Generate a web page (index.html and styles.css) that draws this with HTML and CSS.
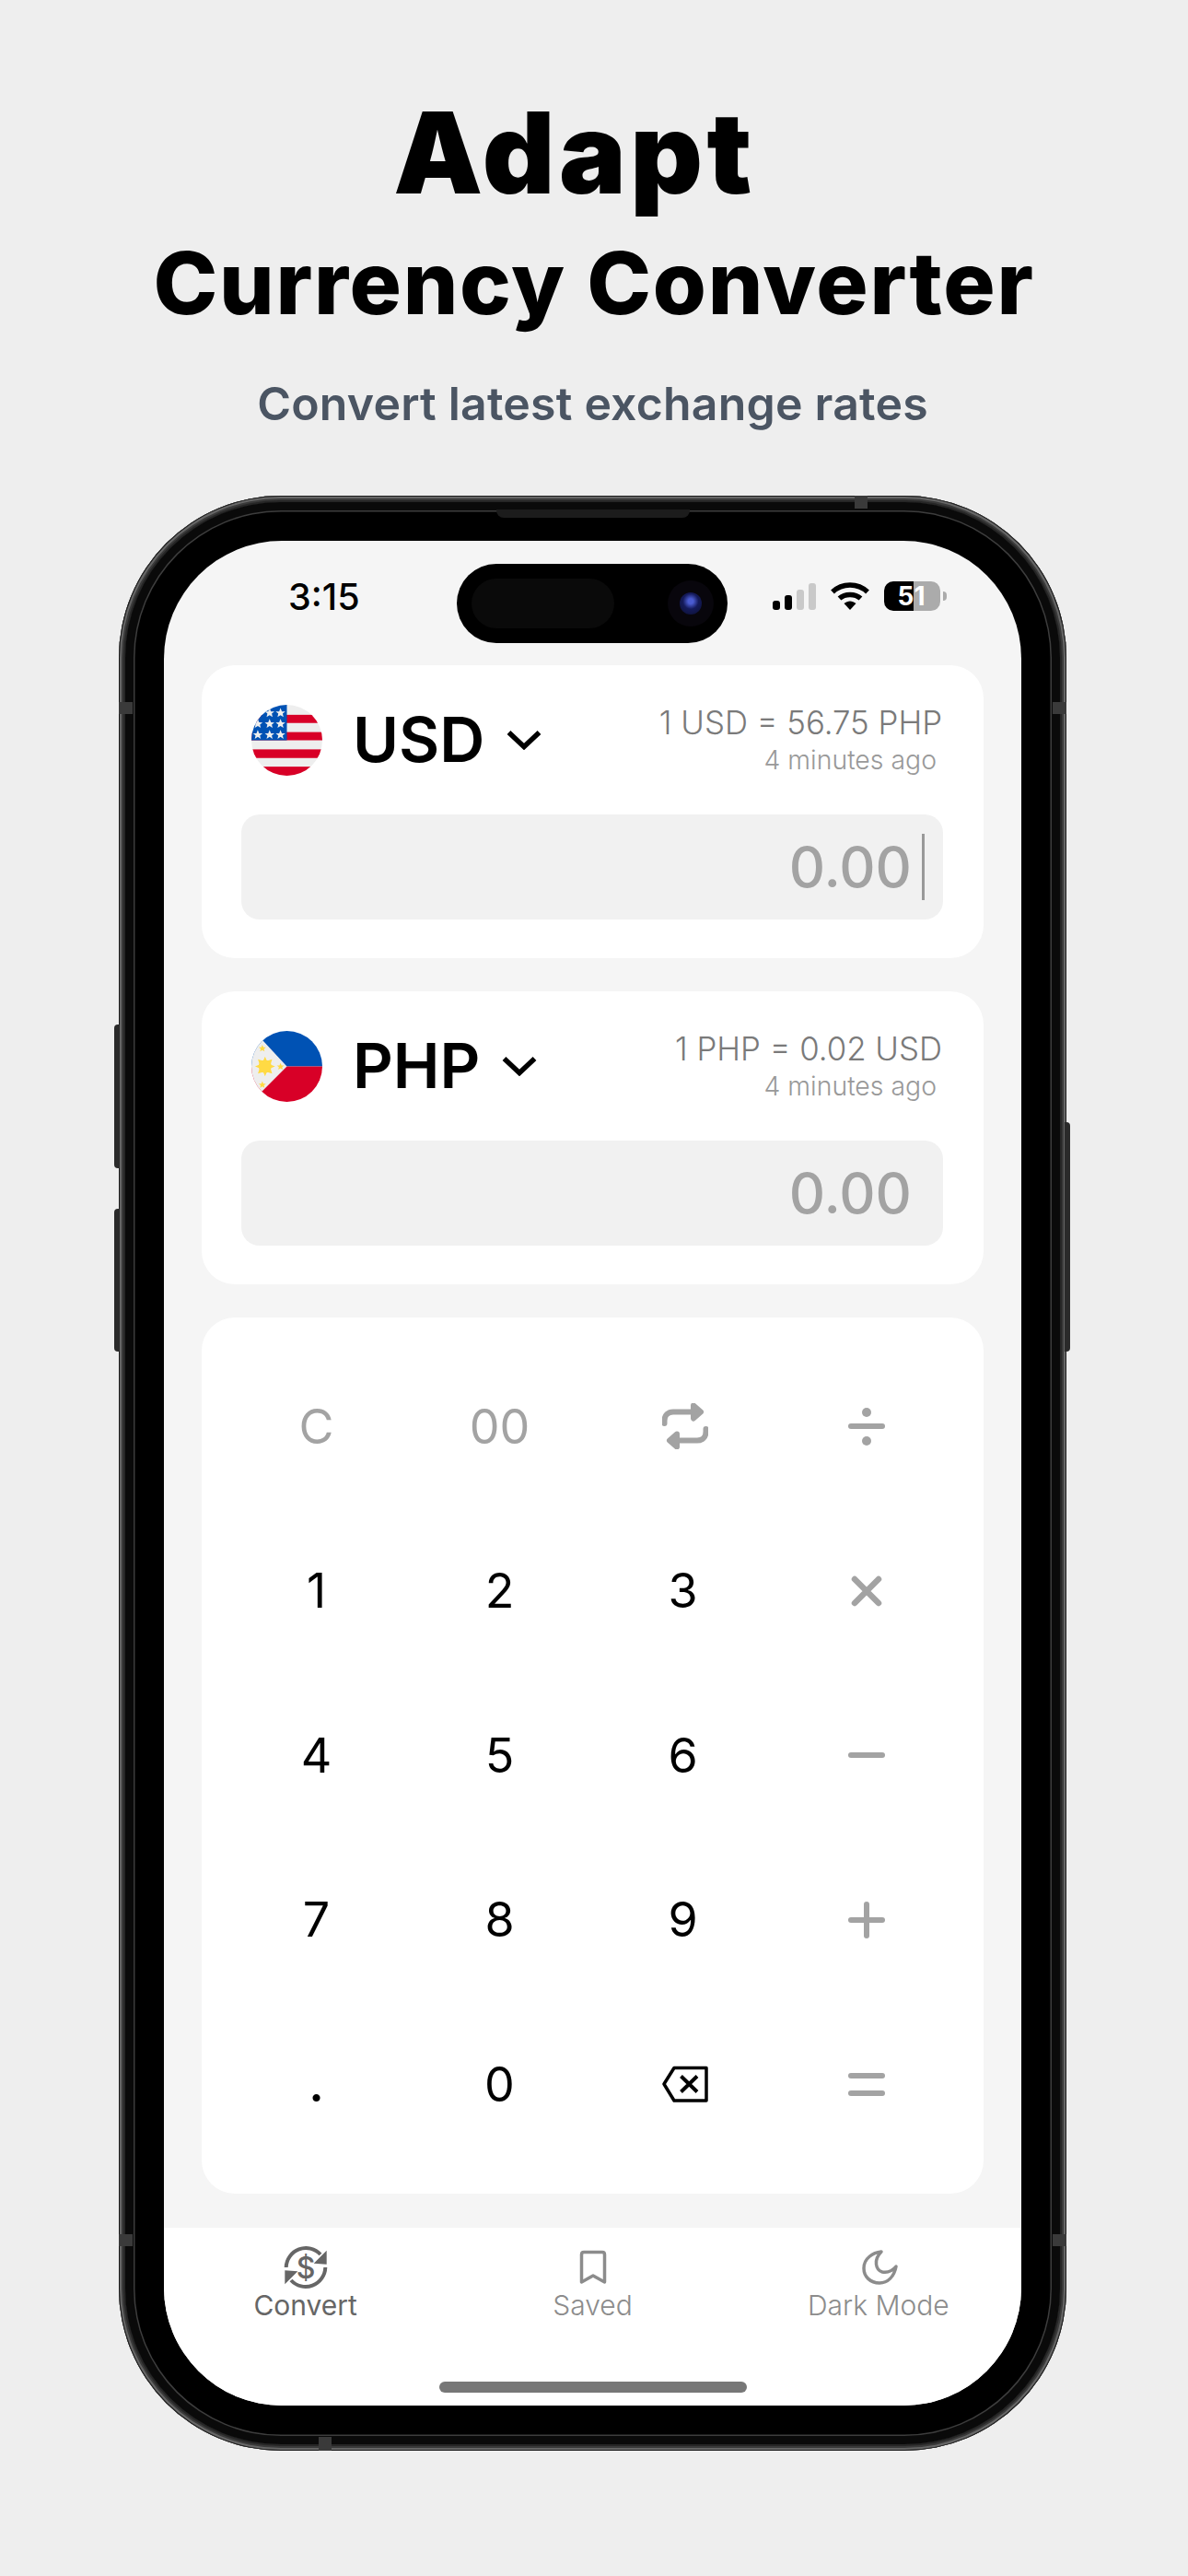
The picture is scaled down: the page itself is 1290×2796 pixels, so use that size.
FILE: index.html
```html
<!DOCTYPE html>
<html>
<head>
    <title>Adapt Currency Converter</title>
    <link rel="stylesheet" href="styles.css">
</head>
<body>
    <header class="hero">
        <h1 class="hero-name">Adapt</h1>
        <h2 class="hero-title">Currency Converter</h2>
        <p class="hero-sub">Convert latest exchange rates</p>
    </header>

    <div class="phone">
        <span class="side-btn vol-up"></span>
        <span class="side-btn vol-down"></span>
        <span class="side-btn power"></span>
        <span class="band band-top"></span>
        <span class="band band-bottom"></span>
        <span class="band band-lt"></span>
        <span class="band band-rt"></span>
        <span class="band band-lb"></span>
        <span class="band band-rb"></span>

        <div class="bezel">
            <span class="speaker"></span>
            <div class="screen">
                <div class="status">
                    <span class="time">3:15</span>
                    <div class="island">
                        <span class="island-pill"></span>
                        <span class="camera"><span class="lens"></span></span>
                    </div>
                    <div class="status-right">
                        <div class="signal">
                            <span class="bar b1"></span>
                            <span class="bar b2"></span>
                            <span class="bar b3"></span>
                            <span class="bar b4"></span>
                        </div>
                        <svg class="wifi" viewBox="0 0 42 30">
                            <path d="M2 10.500C12.500 0.500 29.500 0.500 40 10.500" fill="none" stroke="#000" stroke-width="5.500"/>
                            <path d="M9.500 17.500C15.500 12 26.500 12 32.500 17.500" fill="none" stroke="#000" stroke-width="5.500"/>
                            <path d="M14.500 23L21 30L27.500 23C23.500 19.500 18.500 19.500 14.500 23Z" fill="#000"/>
                        </svg>
                        <div class="battery">
                            <span class="battery-level">51</span>
                        </div>
                        <span class="battery-nub"></span>
                    </div>
                </div>

                <main class="content">
                    <section class="card currency">
                        <div class="currency-head">
                            <svg class="flag" viewBox="0 0 78 78">
                                <defs>
                                    <clipPath id="flagClip"><circle cx="39" cy="39" r="39"/></clipPath>
                                    <polygon id="star" points="0,-5.500 1.500,-1.700 5.300,-1.600 2.400,0.700 3.300,4.400 0,2.300 -3.300,4.400 -2.400,0.700 -5.300,-1.600 -1.500,-1.700"/>
                                </defs>
                                <g clip-path="url(#flagClip)">
                                    <rect width="78" height="78" fill="#eeeeee"/>
                                    <rect y="11" width="78" height="9" fill="#d80027"/>
                                    <rect y="30" width="78" height="9" fill="#d80027"/>
                                    <rect y="49" width="78" height="9.500" fill="#d80027"/>
                                    <rect y="68" width="78" height="10" fill="#d80027"/>
                                    <rect width="39" height="39" fill="#0052b4"/>
                                    <g fill="#eeeeee">
                                        <use href="#star" x="20" y="9"/>
                                        <use href="#star" x="32" y="9"/>
                                        <use href="#star" x="7" y="21"/>
                                        <use href="#star" x="20" y="21"/>
                                        <use href="#star" x="32" y="21"/>
                                        <use href="#star" x="7" y="33"/>
                                        <use href="#star" x="20" y="33"/>
                                        <use href="#star" x="32" y="33"/>
                                    </g>
                                </g>
                            </svg>
                            <span class="code">USD</span>
                            <svg class="chevron" viewBox="0 0 38 22">
                                <path d="M2.500 3L19 18.500L35.500 3" fill="none" stroke="#000" stroke-width="5.500"/>
                            </svg>
                            <div class="rate">
                                <span class="rate-value">1 USD = 56.75 PHP</span>
                                <span class="rate-time">4 minutes ago</span>
                            </div>
                        </div>
                        <div class="amount">
                            <span class="amount-value">0.00</span>
                            <span class="caret"></span>
                        </div>
                    </section>

                    <section class="card currency">
                        <div class="currency-head">
                            <svg class="flag" viewBox="0 0 78 78">
                                <g clip-path="url(#flagClip)">
                                    <rect width="78" height="39" fill="#0052b4"/>
                                    <rect y="39" width="78" height="39" fill="#d80027"/>
                                    <polygon points="0,0 12,10 39,39 12,66 0,78" fill="#eeeeee"/>
                                    <g fill="#ffda44">
                                        <circle cx="15" cy="39" r="7"/>
                                        <polygon points="15,28 17,33 22.800,31.200 21,37 26,39 21,41 22.800,46.800 17,45 15,50 13,45 7.200,46.800 9,41 4,39 9,37 7.200,31.200 13,33"/>
                                        <use href="#star" x="12" y="19" transform="translate(3 5) scale(.75)"/>
                                        <use href="#star" x="12" y="59" transform="translate(3 15) scale(.75)"/>
                                        <use href="#star" x="32" y="39" transform="translate(8 10) scale(.75)"/>
                                    </g>
                                </g>
                            </svg>
                            <span class="code">PHP</span>
                            <svg class="chevron" viewBox="0 0 38 22">
                                <path d="M2.500 3L19 18.500L35.500 3" fill="none" stroke="#000" stroke-width="5.500"/>
                            </svg>
                            <div class="rate">
                                <span class="rate-value">1 PHP = 0.02 USD</span>
                                <span class="rate-time">4 minutes ago</span>
                            </div>
                        </div>
                        <div class="amount">
                            <span class="amount-value">0.00</span>
                        </div>
                    </section>

                    <section class="card keypad">
                        <div class="key key-muted">C</div>
                        <div class="key key-muted">00</div>
                        <div class="key">
                            <svg class="key-icon key-icon-shift" viewBox="0 0 50 50" fill="none" stroke="#a3a3a3" stroke-width="6" stroke-linecap="round" stroke-linejoin="round">
                                <path d="M2.500 22V19C2.500 13 6.500 9.500 12 9.500H36"/>
                                <path d="M34 2.500L42 9.500L34 16.500Z" fill="#a3a3a3"/>
                                <path d="M47.500 28V31C47.500 37 43.500 40.500 38 40.500H14"/>
                                <path d="M16 33.500L8 40.500L16 47.500Z" fill="#a3a3a3"/>
                            </svg>
                        </div>
                        <div class="key">
                            <svg class="key-icon" viewBox="0 0 50 50" fill="#a3a3a3">
                                <rect x="5" y="22" width="40" height="6" rx="3"/>
                                <circle cx="25" cy="10" r="5"/>
                                <circle cx="25" cy="41" r="5"/>
                            </svg>
                        </div>

                        <div class="key">1</div>
                        <div class="key">2</div>
                        <div class="key">3</div>
                        <div class="key">
                            <svg class="key-icon" viewBox="0 0 50 50" fill="none" stroke="#a3a3a3" stroke-width="6.500" stroke-linecap="round">
                                <path d="M12 12L38 38M38 12L12 38"/>
                            </svg>
                        </div>

                        <div class="key">4</div>
                        <div class="key">5</div>
                        <div class="key">6</div>
                        <div class="key">
                            <svg class="key-icon" viewBox="0 0 50 50" fill="#a3a3a3">
                                <rect x="5" y="22" width="40" height="6" rx="3"/>
                            </svg>
                        </div>

                        <div class="key">7</div>
                        <div class="key">8</div>
                        <div class="key">9</div>
                        <div class="key">
                            <svg class="key-icon" viewBox="0 0 50 50" fill="#a3a3a3">
                                <rect x="5" y="22" width="40" height="6" rx="3"/>
                                <rect x="22" y="5" width="6" height="40" rx="3"/>
                            </svg>
                        </div>

                        <div class="key key-dot">.</div>
                        <div class="key">0</div>
                        <div class="key">
                            <svg class="key-icon key-icon-shift" viewBox="0 0 50 50" fill="none" stroke="#000" stroke-width="3.500" stroke-linejoin="round">
                                <path d="M13 7.500H48V43H13L2 25Z"/>
                                <path d="M20.500 16.500L38 33.500M38 16.500L20.500 33.500" stroke-width="4"/>
                            </svg>
                        </div>
                        <div class="key">
                            <svg class="key-icon" viewBox="0 0 50 50" fill="#a3a3a3">
                                <rect x="5" y="13" width="40" height="6" rx="3"/>
                                <rect x="5" y="32" width="40" height="6" rx="3"/>
                            </svg>
                        </div>
                    </section>
                </main>

                <nav class="tabs">
                    <div class="tab tab-active">
                        <svg class="tab-icon" viewBox="0 0 48 48" fill="none" stroke="#666" stroke-width="4">
                            <path d="M2.700 24A21.500 21.500 0 0 1 40 10"/>
                            <path d="M45.300 24A21.500 21.500 0 0 1 8 38"/>
                            <path d="M46.700 5.700V20.700L32.700 19.700Z" fill="#666" stroke="none"/>
                            <path d="M1.300 42.300V27.300L15.300 28.300Z" fill="#666" stroke="none"/>
                            <text class="tab-dollar" x="24" y="35.500" text-anchor="middle" stroke="none" fill="#666">$</text>
                        </svg>
                        <span>Convert</span>
                    </div>
                    <div class="tab">
                        <svg class="tab-icon" viewBox="0 0 48 48" fill="none" stroke="#8c8c8c" stroke-width="3.500" stroke-linejoin="round">
                            <path d="M12.500 10C12.500 8.500 13.500 7.500 15 7.500H35C36.500 7.500 37.500 8.500 37.500 10V40L25 33L12.500 40Z"/>
                        </svg>
                        <span>Saved</span>
                    </div>
                    <div class="tab">
                        <svg class="tab-icon" viewBox="0 0 48 48" fill="none" stroke="#8c8c8c" stroke-width="3.500" stroke-linejoin="round">
                            <path d="M27 7C18 8 8 14 8 25C8 34 15 41 25 41C34 41 41 34 43 23C38 29 33 30 28 29C21 27 18 16 27 7Z"/>
                        </svg>
                        <span>Dark Mode</span>
                    </div>
                </nav>
                <div class="home-row"><span class="home-bar"></span></div>
            </div>
        </div>
    </div>
</body>
</html>
```

FILE: styles.css
```css
* {
    box-sizing: border-box;
}

body {
    margin: 0;
    width: 1290px;
    height: 2796px;
    overflow: hidden;
    background-color: #eeeeee;
    font-family: Inter, Arial, sans-serif;
    color: #000;
}

/* heading above the phone */
.hero {
    padding-top: 101px;
    text-align: center;
}

.hero-name {
    margin: 0;
    padding-right: 42px;
    font-size: 122px;
    line-height: 130px;
    font-weight: 900;
    letter-spacing: 4.500px;
}

.hero-title {
    margin: 21px 0 0;
    font-size: 94px;
    line-height: 110px;
    font-weight: 800;
    letter-spacing: 1.700px;
}

.hero-sub {
    margin: 46px 0 0;
    padding-right: 3px;
    font-size: 50px;
    line-height: 60px;
    font-weight: 600;
    letter-spacing: 0.200px;
    color: #4b5563;
}

/* phone frame */
.phone {
    position: absolute;
    left: 129px;
    top: 538px;
    width: 1029px;
    height: 2122px;
    padding: 7px;
    border-radius: 176px;
    background-color: #262626;
    box-shadow: inset 0 0 0 1px #1c1c1c, inset 0 0 0 3px #666, inset 0 0 0 5px #3a3a3a;
}

.bezel {
    position: relative;
    height: 100%;
    padding: 42px 42px 42px;
    border-radius: 169px;
    background-color: #000;
    box-shadow: inset 0 0 0 9px #0a0a0a, inset 0 0 0 10.500px #3d3d3d;
}

.speaker {
    position: absolute;
    left: 403px;
    top: 8px;
    width: 210px;
    height: 9px;
    border-radius: 0 0 8px 8px;
    background-color: #1c1c1c;
}

.side-btn {
    position: absolute;
    width: 6px;
    background-color: #2a2a2a;
}

.vol-up {
    left: -5px;
    top: 574px;
    height: 156px;
    border-radius: 4px 0 0 4px;
}

.vol-down {
    left: -5px;
    top: 774px;
    height: 155px;
    border-radius: 4px 0 0 4px;
}

.power {
    right: -4px;
    top: 680px;
    height: 249px;
    border-radius: 0 4px 4px 0;
}

.band {
    position: absolute;
    background-color: #3a3a3a;
    z-index: 1;
}

.band-top {
    left: 799px;
    top: 0;
    width: 14px;
    height: 14px;
}

.band-bottom {
    left: 217px;
    bottom: 0;
    width: 14px;
    height: 15px;
}

.band-lt,
.band-rt,
.band-lb,
.band-rb {
    width: 15px;
    height: 13px;
}

.band-lt {
    left: 0;
    top: 224px;
}

.band-rt {
    right: 0;
    top: 224px;
}

.band-lb {
    left: 0;
    top: 1887px;
}

.band-rb {
    right: 0;
    top: 1887px;
}

.screen {
    position: relative;
    display: flex;
    flex-direction: column;
    height: 100%;
    overflow: hidden;
    border-radius: 128px;
    background-color: #f5f5f5;
}

/* status bar */
.status {
    position: relative;
    height: 135px;
    flex-shrink: 0;
}

.time {
    position: absolute;
    left: 135px;
    top: 38px;
    font-size: 39.500px;
    line-height: 46px;
    font-weight: 500;
}

.island {
    position: absolute;
    left: 318px;
    top: 25px;
    display: flex;
    align-items: center;
    justify-content: space-between;
    width: 294px;
    height: 86px;
    padding: 0 16px;
    border-radius: 43px;
    background-color: #000;
}

.island-pill {
    width: 155px;
    height: 54px;
    border-radius: 27px;
    background-color: #0a0a0a;
}

.camera {
    display: flex;
    align-items: center;
    justify-content: center;
    width: 50px;
    height: 50px;
    margin-right: -1px;
    border-radius: 50%;
    background-color: #08060c;
}

.lens {
    width: 24px;
    height: 24px;
    border-radius: 50%;
    background: radial-gradient(circle at 50% 40%, #4a5bd0 0 15%, #141a5a 45%, #0c1030 100%);
}

.status-right {
    position: absolute;
    left: 661px;
    top: 44px;
    display: flex;
    align-items: flex-start;
}

.signal {
    display: flex;
    align-items: flex-end;
    gap: 5px;
    height: 30px;
    margin-top: 1px;
}

.bar {
    width: 8px;
    border-radius: 3px;
}

.b1 {
    height: 10px;
    background-color: #000;
}

.b2 {
    height: 16px;
    background-color: #000;
}

.b3 {
    height: 22px;
    background-color: #c9c9c9;
}

.b4 {
    height: 29px;
    background-color: #c9c9c9;
}

.wifi {
    width: 42px;
    height: 30px;
    margin: 1px 0 0 16px;
}

.battery {
    width: 61px;
    height: 32px;
    margin-left: 16px;
    border-radius: 10px;
    background: linear-gradient(90deg, #000 0 32px, #ababab 32px);
}

.battery-level {
    display: block;
    padding-right: 2px;
    font-size: 28px;
    line-height: 33px;
    font-weight: 700;
    color: #fff;
    text-align: center;
}

.battery-nub {
    width: 4px;
    height: 10px;
    margin: 11px 0 0 3px;
    border-radius: 0 4px 4px 0;
    background-color: #ababab;
}

/* cards */
.content {
    display: flex;
    flex-direction: column;
    gap: 36px;
    padding: 0 41px;
}

.card {
    border-radius: 36px;
    background-color: #fff;
}

.currency {
    height: 318px;
    padding: 41px 44px 42px 43px;
}

.currency-head {
    display: flex;
    align-items: center;
    height: 80px;
    margin-bottom: 41px;
}

.flag {
    width: 77px;
    height: 77px;
    margin-left: 11px;
}

.code {
    margin: -2px 0 0 33px;
    font-size: 68px;
    line-height: 80px;
    font-weight: 600;
}

.chevron {
    width: 38px;
    height: 22px;
    margin-left: 24px;
}

.rate {
    display: flex;
    flex-direction: column;
    align-items: flex-end;
    margin-left: auto;
    padding-right: 1px;
    font-weight: 300;
}

.rate-value {
    font-size: 34.800px;
    line-height: 40px;
    color: #7a7a7a;
}

.rate-time {
    margin: 4px 6px 0 0;
    font-size: 28.400px;
    line-height: 34px;
    color: #999;
}

.amount {
    display: flex;
    align-items: center;
    justify-content: flex-end;
    height: 114px;
    padding-right: 34px;
    border-radius: 20px;
    background-color: #f1f1f1;
}

.amount-value {
    font-size: 61px;
    line-height: 72px;
    font-weight: 450;
    color: #a3a3a3;
}

.caret {
    width: 3px;
    height: 72px;
    margin: 0 -14px 0 11px;
    background-color: #999;
}

/* keypad */
.keypad {
    display: grid;
    grid-template-columns: repeat(4, 199px);
    grid-auto-rows: 178.500px;
    height: 951px;
    padding: 29px 27px 0 25px;
}

.key {
    display: flex;
    align-items: center;
    justify-content: center;
    font-size: 52px;
    font-weight: 400;
}

.key-muted {
    color: #a3a3a3;
}

.key-dot {
    font-weight: 600;
}

.key-icon {
    width: 50px;
    height: 50px;
}

.key-icon-shift {
    margin-left: 4px;
}

/* bottom tabs */
.tabs {
    display: grid;
    grid-template-columns: repeat(3, 1fr);
    flex-shrink: 0;
    height: 167px;
    margin-top: 37px;
    padding-top: 19px;
    background-color: #fff;
}

.tab {
    display: flex;
    flex-direction: column;
    align-items: center;
    font-size: 30px;
    line-height: 36px;
    font-weight: 300;
    color: #8c8c8c;
}

.tab-active {
    padding-right: 3px;
    font-weight: 400;
    color: #666;
}

.tab-icon {
    width: 48px;
    height: 48px;
    margin-bottom: -1px;
}

.tab-dollar {
    font-size: 32px;
    font-weight: 500;
}

.home-row {
    display: flex;
    flex: 1;
    justify-content: center;
    background-color: #fff;
}

.home-bar {
    width: 334px;
    height: 12px;
    border-radius: 6px;
    background-color: #777;
}
```
